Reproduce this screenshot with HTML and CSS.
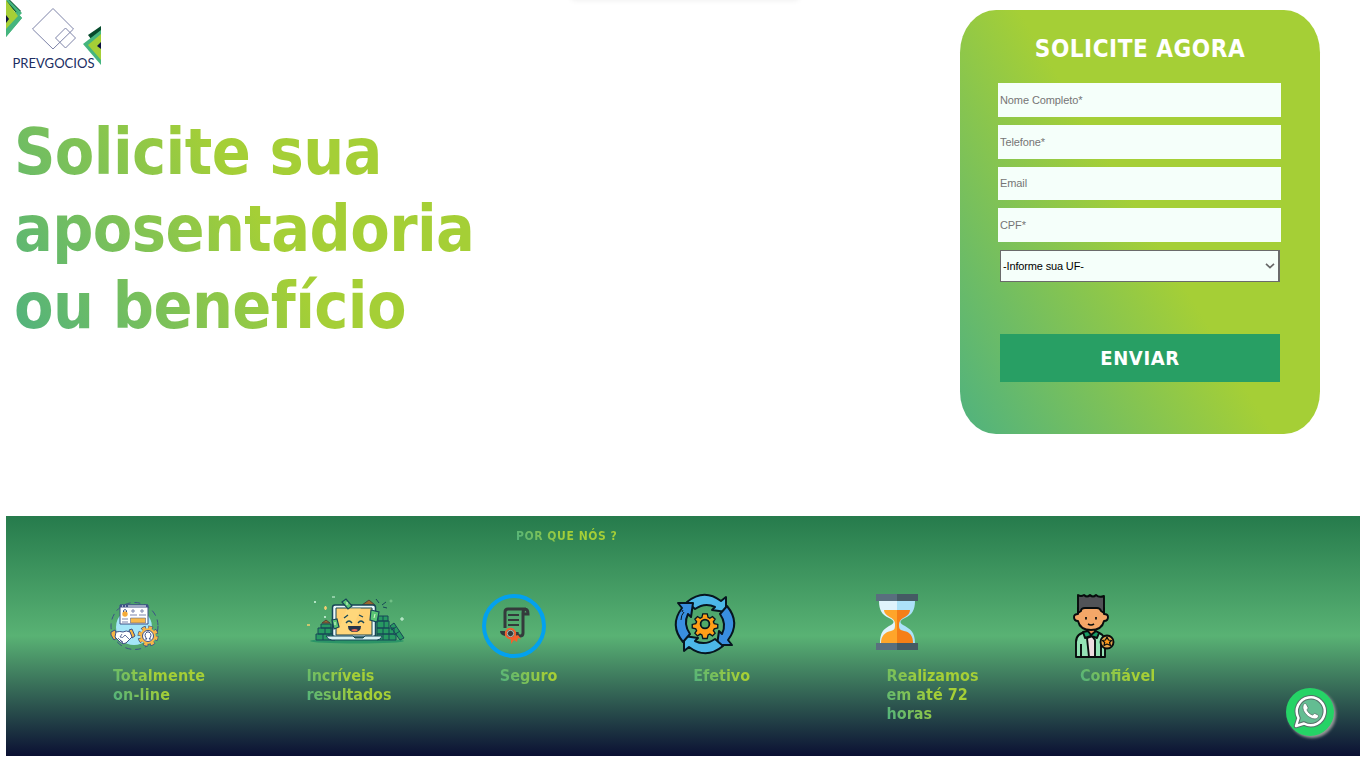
FILE: index.html
```html
<!DOCTYPE html>
<html lang="pt-BR">
<head>
<meta charset="utf-8">
<title>Prevgocios</title>
<link rel="stylesheet" href="styles.css">
</head>
<body>
<div class="top-shadow"></div>
<main class="hero">
  <div class="intro">
    <svg class="logo" viewBox="0 0 95 76" width="95" height="76" role="img" aria-label="Prevgocios">
      <path d="M4 0 15 11 11.500 14-2 1z" fill="#064b2c"/>
      <path d="M0 0H3L16 13 0 29V37L16 18z" fill="#45b57e"/>
      <path d="M0 12 0 37 16 18 11 12z" fill="#45b57e"/>
      <path d="M0 0 12 16 0 29z" fill="#a5cf36"/>
      <path d="M0 15 3 19 0 23z" fill="#0b1240"/>
      <path d="M95 26 82 35 85 39 95 31z" fill="#064b2c"/>
      <path d="M95 30 77 44 95 65z" fill="#45b57e"/>
      <path d="M95 34 82 45 95 60z" fill="#a5cf36"/>
      <path d="M95 42 91 46 95 49z" fill="#0b1240"/>
      <g fill="none" stroke="#7d83a8" stroke-width="1"><path d="M47 8.500 67.500 29 47 49 26.500 29z"/><path d="M59.500 28 69.500 38 59.500 48 49.500 38z"/></g>
      <text class="logo-text" x="6.500" y="68" textLength="82" lengthAdjust="spacingAndGlyphs">PREVGOCIOS</text>
    </svg>
    <h1 class="headline">Solicite sua<br>aposentadoria<br>ou benefício</h1>
  </div>
  <form class="card">
    <h2 class="card-title">SOLICITE AGORA</h2>
    <input class="field" placeholder="Nome Completo*">
    <input class="field" placeholder="Telefone*">
    <input class="field field-short" placeholder="Email">
    <input class="field" placeholder="CPF*">
    <div class="select"><span>-Informe sua UF-</span><svg width="10" height="6" viewBox="0 0 10 6"><path d="M1 .8 5 4.600 9 .8" fill="none" stroke="#666" stroke-width="1.600"/></svg></div>
    <button class="submit" type="button">ENVIAR</button>
  </form>
</main>
<section class="why">
  <h3 class="why-title">POR QUE NÓS ?</h3>
  <div class="features">
    <div class="feature">
      <div class="pic"><svg class="i1" width="50" height="50" viewBox="0 0 50 50">
        <circle cx="24" cy="26" r="18" fill="#a5e6f8"/>
        <circle cx="24.500" cy="25" r="23.500" fill="none" stroke="#3d5186" stroke-dasharray="6 4"/>
        <path d="M10 4h28v19H10z" fill="#fff" stroke="#3d5186"/><path d="M10 3.500h28v3H10z" fill="#3d5186"/><path d="M12 5h1M15 5h1M18 5h18" stroke="#fff"/>
        <path d="M20.500 17h15v5h-15z" fill="#f7b84b" stroke="#3d5186" stroke-width=".5"/><path d="M12 18h6M12 21h6M20 14h7M29 14h7M22 9h2v2h-2zM31 9h2v2h-2z" fill="none" stroke="#7d86ad"/>
        <circle cx="15" cy="13" r="2.700" fill="#f5aa38"/><path d="M13.500 11V9.500q1.500-2 3 0V11" fill="none" stroke="#3d5186"/>
        <path d="M1 31l4-2 3 7-4 3-3-5zM19 29l3-1 3 7-3 2z" fill="#f5b443" stroke="#3d5186"/>
        <path d="M6 31q4-1 7 0 3-2 7 0l2 5-6 6q-3 2-6-1l-5-5z" fill="#fff" stroke="#3d5186"/><path d="M12 33l-2 3q3 2 5-2l5 5M10 39l3 2M8 37l5 5" fill="none" stroke="#3d5186" stroke-width=".8"/>
        <circle cx="38" cy="35" r="8.500" fill="none" stroke="#3d5186" stroke-width="4" stroke-dasharray="4.400 2.270"/><circle cx="38" cy="35" r="7.800" fill="#f8b747"/><circle cx="38" cy="35" r="8.300" fill="none" stroke="#f8b747" stroke-width="3" stroke-dasharray="3.300 3.218" stroke-dashoffset="-.4"/><circle cx="38" cy="35" r="5.500" fill="#fff" stroke="#3d5186"/><path d="M35 38h2q-4-4 0-7h2q4 3 0 7h2" fill="none" stroke="#3d5186"/>
      </svg></div>
      <p class="label l-total">Totalmente<br>on-line</p>
    </div>
    <div class="feature">
      <div class="pic"><svg class="i2" width="100" height="50" viewBox="0 0 100 50">
        <ellipse cx="49" cy="44" rx="47" ry="2.500" fill="#2b9467"/>
        <g fill="#279962" stroke="#174657"><path d="M8 37h19v6H8zM10 31h17v6H10zM13 27h10v4H13zM69 37h19v6H69zM69 31h17v6H69zM69 24h12v7H69zM70 19h10v5H70zM82 29l4-3 10 15-4 2z"/><path d="M15 37v6M21 37v6M17 31v6M23 31v6M75 31v12M81 31v12M76 24v7M75 19v5M83 33l5-3M86 38l6-4"/></g>
        <path d="M14 26l4-3 4 3zM54 8l7-5 6 5z" fill="#9a682e" stroke="#514238"/>
        <rect x="24.500" y="8" width="43" height="32" rx="2.500" fill="#eaf9fb" stroke="#174657" stroke-width="1.500"/><path d="M28 11h36v27H28z" fill="#ffd071" stroke="#174657"/><path d="M39 11h14L42 37H29z" fill="#ffe08d" opacity=".4"/>
        <path d="M18 39h27l2 2h8l2-2h17q-1 4-5 4H24q-4 0-6-4z" fill="#d7f1f4" stroke="#174657"/>
        <g fill="none" stroke="#174657" stroke-width="1.300"><path d="M38 26q3-4 6 0M50 26q3-4 6 0M36 21l4-3M51 18l4 2"/></g>
        <path d="M40 29h13q0 6-6.500 6T40 29z" fill="#25344b"/><path d="M43 33q4-2 7 0-3 3-7 0z" fill="#f06754"/>
        <g fill="#5ac575" stroke="#174657" stroke-width="1.200"><path d="M34 5l4-3 6 7-4 3zM24 23l5-1 2 8-5 2zM63 13l8 2-2 10-7-2z"/></g><path d="M39 5v3M27 25v3M67 17l-1 4" stroke="#dff7cf"/>
        <path d="M71 6l-3-4M74 8l4-3M75 10l4 1" stroke="#174657"/><path d="M6 5h2M7 4v2M16 20h2M17 19v2M24 0h3M92 22h4M94 20v4" stroke="#d3f8e1"/><path d="M16 11h3M17.500 9v4M-1 28h3" stroke="#f2cf70" stroke-width="1.500"/><circle cx="83" cy="4" r="1" fill="none" stroke="#80cb92"/>
      </svg></div>
      <p class="label l-inc">Incríveis<br>resultados</p>
    </div>
    <div class="feature">
      <div class="pic"><svg class="i3" width="64" height="64" viewBox="0 0 64 64">
        <circle cx="32" cy="32" r="30" fill="none" stroke="#03a1ef" stroke-width="4"/>
        <path d="M23 34V18q0-3 3-3h18q-3 0-3 4v20q0 3-3 3M26 15h17q3 0 3 5h-4M38 42q-3 0-3-4" fill="none" stroke="#343a3b" stroke-width="3"/><path d="M26 21h11M26 26h11M26 31h11" stroke="#343a3b" stroke-width="2"/>
        <path d="M18 37h5v5q-5-1-5-5z" fill="#343a3b"/><path d="M29 44l7-3 3 4-3-1-1 4-3-2-3 4z" fill="#f4602d"/><circle cx="28.500" cy="39.500" r="4.700" fill="#343a3b" stroke="#f4602d" stroke-width="2"/><circle cx="28.500" cy="39.500" r="3.200" fill="none" stroke="#dce4dc" stroke-width=".8"/>
      </svg></div>
      <p class="label">Seguro</p>
    </div>
    <div class="feature">
      <div class="pic"><svg class="i4" width="60" height="60" viewBox="0 0 60 60">
        <g stroke="#07151f" stroke-width="2" stroke-linejoin="round"><path d="M12 8Q29-6 46 7l5-4v15L37 16l3-3Q30 8 20 15z" fill="#4cb7e8"/><path d="M12 8Q29-6 46 7l5-4v15L37 16l3-3Q30 8 20 15z" fill="#398ee0" transform="rotate(90 30 30)"/><path d="M12 8Q29-6 46 7l5-4v15L37 16l3-3Q30 8 20 15z" fill="#4cb7e8" transform="rotate(180 30 30)"/><path d="M12 8Q29-6 46 7l5-4v15L37 16l3-3Q30 8 20 15z" fill="#398ee0" transform="rotate(270 30 30)"/></g>
        <g transform="translate(30 30) scale(.88)"><path transform="translate(-.5 .5)" d="M-2-12h5l1 4 2 1 3-2 3 3-2 3 1 2 4 1v4l-4 1-1 2 2 3-3 3-3-2-2 1-1 4h-5l-1-4-2-1-3 2-3-3 2-3-1-2-4-1V0l4-1 1-2-2-3 3-3 3 2 2-1z" fill="#ff9f18" stroke="#07151f" stroke-width="1.500"/><circle r="5" fill="#50aa69" stroke="#07151f" stroke-width="2"/></g>
        <path d="M6 26q0-5 3-8M7 18l1-2" fill="none" stroke="#07151f"/>
      </svg></div>
      <p class="label">Efetivo</p>
    </div>
    <div class="feature">
      <div class="pic"><svg class="i5" width="42" height="56" viewBox="0 0 42 56">
        <path d="M3 7h18v42H4C4 38 8 35 13 32 19 29 19 27 13 24 6 21 3 16 3 7z" fill="#dff3fc"/><path d="M39 7H21v42h18C39 38 34 35 29 32 23 29 23 27 29 24 36 21 39 16 39 7z" fill="#ace1f8"/>
        <path d="M8 16h13v33H5C5 42 9 38 15 37 19 36 19 34 19 30 19 25 15 24 12 22 9 20 8 18 8 16z" fill="#ffa52a"/><path d="M21 16h13c0 3-2 5-5 7-4 2-6 4-6 8 0 4 1 5 5 6 6 1 9 5 9 12H21z" fill="#f57f17"/>
        <path d="M0 0h21v7H0zM0 49h21v7H0z" fill="#596f7e"/><path d="M21 0h21v7H21zM21 49h21v7H21z" fill="#455a64"/>
      </svg></div>
      <p class="label">Realizamos<br>em até 72<br>horas</p>
    </div>
    <div class="feature">
      <div class="pic"><svg class="i6" width="42" height="64" viewBox="0 0 42 64">
        <g stroke="#080c0d" stroke-width="1.900" stroke-linejoin="round"><path d="M13 33h8v10h-8z" fill="#e88e50"/><path d="M2 63V48q0-9 11-10l4 6 4-6q10 1 10 10v15z" fill="#94e2b5"/><path d="M13 44l5-2 3 4v17h-6z" fill="#efdce0"/><path d="M9 38l5-1 3 4 5-4 3 2-2 5-6-2-6 2z" fill="#169b64"/>
        <path d="M4 14v6q-4 0-4 3 0 4 4 4 2 9 13 9t13-9q4 0 4-4 0-3-4-3v-6z" fill="#f4a768"/><path d="M4 19V1q3 2 6 0 3 3 6 0 3 3 6 0 3 3 8 1v17l-3-2q-1-3-4-3H11q-4 0-4 3z" fill="#515357"/>
        <path d="M7 50v13M27 51v12" fill="none"/><circle cx="33" cy="48" r="6.500" fill="#e8a349"/><path d="M33 43l1.500 3 3 .5-2 2 1 3-3.500-1.500-3 1.500.7-3-2.200-2 3-.5z" fill="#ff9818" stroke-width="1.200"/></g>
        <path d="M12 23v2.500M22 23v2.500M14 30q3 2 6 0" fill="none" stroke="#080c0d" stroke-width="1.700"/>
      </svg></div>
      <p class="label">Confiável</p>
    </div>
  </div>
</section>
<a class="whats" aria-label="WhatsApp"><svg width="34" height="34" viewBox="0 0 34 34">
  <path d="M3 31l2.500-8A14 14 0 1 1 11 28.500z" fill="#63bd92" stroke="#56716a" stroke-width="4.500" stroke-linejoin="round"/><path d="M3 31l2.500-8A14 14 0 1 1 11 28.500z" fill="none" stroke="#fff" stroke-width="2.500" stroke-linejoin="round"/>
  <path d="M10.500 9.500c1-1.500 2.500-1 3 0l1.500 3c.5 1-1 1.700-1 2.500 1.200 2.600 3 4.200 5.500 5 1-.2 1.500-2 2.500-1.500l3 1.500c1 .5.500 2-.5 3-5 4-17.500-6-14-13.500z" fill="#fff" stroke="#56716a" stroke-width=".8"/>
</svg></a>
</body>
</html>
```

FILE: styles.css
```css
* { box-sizing: border-box; }
body {
  margin: 0;
  height: 768px;
  padding: 0 6px;
  overflow: hidden;
  background: #fff;
  font-family: Tahoma, "DejaVu Sans Condensed", "DejaVu Sans", sans-serif;
  font-stretch: condensed;
}
h1, h2, h3, p { margin: 0; }
.top-shadow {
  position: absolute;
  top: -5px;
  left: 572px;
  width: 226px;
  height: 4px;
  box-shadow: 0 0 6px rgba(0, 0, 0, .12);
}
.hero {
  height: 516px;
  display: flex;
  justify-content: space-between;
  align-items: flex-start;
  padding-right: 40px;
}
.intro { width: 512px; }
.logo { display: block; }
.logo-text { font: 13.5px Lato, sans-serif; fill: #202d62; }
.headline {
  margin: 38px 0 0 8px;
  width: 504px;
  font-size: 64px;
  line-height: 77px;
  letter-spacing: -.6px;
  white-space: nowrap;
}
.headline, .why-title, .label {
  background: linear-gradient(60deg, #4fb27f, #a5cf36 50%);
  -webkit-background-clip: text;
  background-clip: text;
  color: transparent;
}
.card {
  width: 360px;
  height: 424px;
  margin-top: 10px;
  padding: 25px 38px 0;
  border-radius: 10%;
  background: linear-gradient(59deg, #4fb27f, #a5cf36 51%);
  display: flex;
  flex-direction: column;
  align-items: flex-start;
}
.card-title {
  width: 284px;
  height: 48px;
  line-height: 29px;
  font-size: 24px;
  letter-spacing: .55px;
  color: #fff;
  text-align: center;
  white-space: nowrap;
}
.field {
  width: 283px;
  height: 34px;
  margin: 0 0 8px;
  padding: 1px 2px;
  border: 0;
  border-radius: 0;
  background: #f5fffa;
  font: 11px "Liberation Sans", Arial, sans-serif;
  letter-spacing: -.1px;
}
.field::placeholder { color: #757575; }
.field-short { height: 33px; padding-bottom: 3px; }
.select {
  width: 280px;
  height: 32px;
  margin: 0 0 52px 2px;
  padding: 0 3px 0 2px;
  border: 1px solid #6b6b6b;
  border-right-width: 2px;
  background: #f5fffa;
  display: flex;
  align-items: center;
  justify-content: space-between;
  font: 11px "Liberation Sans", Arial, sans-serif;
  letter-spacing: -.15px;
  color: #000;
}
.submit {
  width: 280px;
  height: 48px;
  margin-left: 2px;
  padding: 0;
  border: 0;
  background: #289f64;
  color: #fff;
  font: bold 20px Tahoma, "DejaVu Sans Condensed", "DejaVu Sans", sans-serif;
  font-stretch: condensed;
  letter-spacing: .6px;
}
.why {
  height: 240px;
  padding-top: 12px;
  background: linear-gradient(#267b4c, #59b274 50%, #0b1033);
}
.why-title {
  width: 102px;
  margin-left: 510px;
  font-size: 12px;
  line-height: 16px;
  letter-spacing: .55px;
  white-space: nowrap;
}
.features {
  display: grid;
  grid-template-columns: repeat(6, 193.4px);
  padding: 50px 0 0 107px;
}
.pic { height: 72px; }
.pic svg { display: block; overflow: visible; }
.i1 { transform: translate(-3px, 7px); }
.i2 { transform: translate(2px, 3px); }
.i3 { transform: translate(-18px, 0); }
.i4 { transform: translate(-18px, 0); }
.i5 { transform: translate(-11px, 0); }
.i6 { transform: translate(-6px, 0); }
.label {
  width: 97px;
  font-size: 16px;
  line-height: 19px;
  font-weight: bold;
  white-space: nowrap;
}
.l-total { letter-spacing: .15px; }
.l-inc { letter-spacing: -.1px; }
.whats {
  position: absolute;
  left: 1286px;
  top: 688px;
  width: 48px;
  height: 48px;
  border-radius: 50%;
  background: #25d366;
  box-shadow: 2px 2px 3px #999;
  display: flex;
  align-items: center;
  justify-content: center;
}
```
